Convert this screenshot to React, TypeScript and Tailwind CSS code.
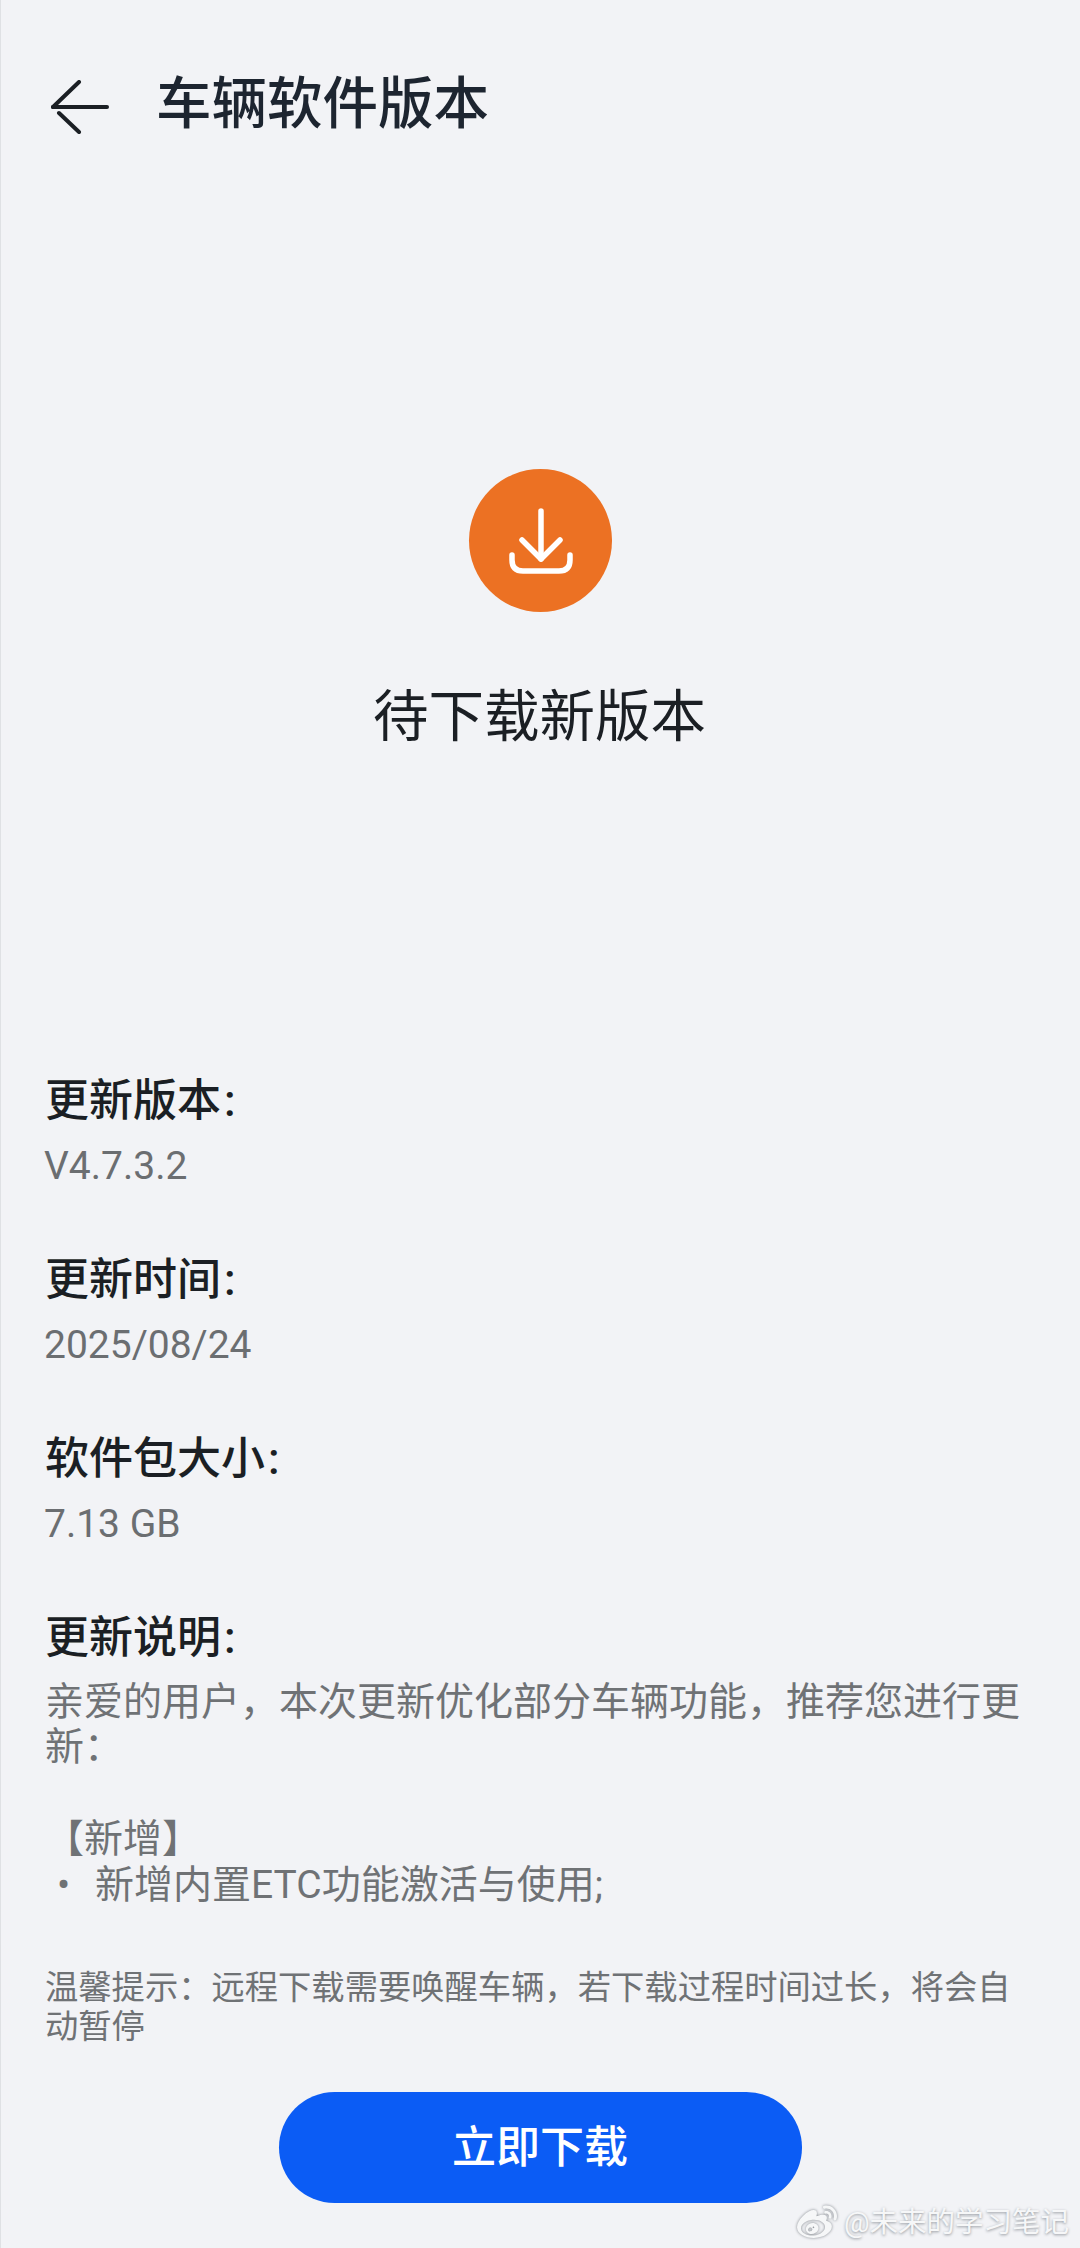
import React from "react";
import { FaWeibo } from "react-icons/fa";

const COMMA = "\uFF0C";
const COLON = "\uFF1A";

function Label({ text }: { text: string }) {
  return (
    <div className="text-[44px] leading-[60px] font-medium text-[#1b1f24]">
      {text}
      <span className="ml-[3px]">:</span>
    </div>
  );
}

function Section({ label, value }: { label: string; value: string }) {
  return (
    <div className="flex flex-col">
      <Label text={label} />
      <div className="text-[39px] leading-[50px] text-[#6b6e71] mt-[10px] -ml-[1px]">{value}</div>
    </div>
  );
}

export default function App() {
  return (
    <div className="w-[1080px] h-[2248px] bg-[#f2f3f6] border-l border-[#dfe1e4] overflow-hidden flex flex-col relative font-['Roboto','Noto_Sans_CJK_SC',sans-serif]">
      <div className="flex items-center pl-[50px] pt-[70px] h-[140px]">
        <svg width="58" height="54" viewBox="0 0 58 54" fill="none" stroke="#1b1f24" strokeWidth="4" strokeLinecap="round" strokeLinejoin="round" className="mt-[4px]">
          <path d="M2 27H56" />
          <path d="M28 2L2 27" />
          <path d="M8 33L28 52" />
        </svg>
        <div className="ml-[47px] text-[55.5px] leading-[70px] font-medium text-[#1d2530]">车辆软件版本</div>
      </div>

      <div className="flex flex-col items-center mt-[329px]">
        <div className="w-[143px] h-[143px] rounded-full bg-[#ec7123] flex items-center justify-center">
          <svg width="66" height="66" viewBox="0 0 66 66" fill="none" stroke="#ffffff" strokeWidth="5.5" strokeLinecap="round" strokeLinejoin="round">
            <path d="M33 3V51" />
            <path d="M14 32L33 51L52 32" />
            <path d="M4 47V52Q4 63 15 63H51Q62 63 62 52V47" />
          </svg>
        </div>
        <div className="mt-[69px] -ml-[2px] text-[55.5px] leading-[74px] text-[#1b1f24]">待下载新版本</div>
      </div>

      <div className="flex flex-col pl-[44px] pr-[45px] mt-[316px]">
        <div className="flex flex-col gap-[59px]">
          <Section label="更新版本" value="V4.7.3.2" />
          <Section label="更新时间" value="2025/08/24" />
          <Section label="软件包大小" value="7.13 GB" />
        </div>
        <div className="mt-[59px]">
          <Label text="更新说明" />
        </div>
        <div className="mt-[12px] text-[39px] leading-[45px] text-[#6f7275]">
          {`亲爱的用户${COMMA}本次更新优化部分车辆功能${COMMA}推荐您进行更新${COLON}`}
        </div>
        <div className="mt-[46px] text-[39px] leading-[46px] text-[#6f7275]">【新增】</div>
        <div className="flex text-[39px] leading-[46px] text-[#6f7275]">
          <span className="w-[50px] pl-[12px]">•</span>
          <span>新增内置ETC功能激活与使用;</span>
        </div>
        <div className="mt-[60px] text-[33.3px] leading-[39px] text-[#6f7275]">
          {`温馨提示${COLON}远程下载需要唤醒车辆${COMMA}若下载过程时间过长${COMMA}将会自动暂停`}
        </div>
      </div>

      <div className="flex justify-center mt-[46px]">
        <div className="w-[523px] h-[111px] rounded-full bg-[#0b5cf5] flex items-center justify-center text-white text-[44px] font-medium -ml-[1px]">立即下载</div>
      </div>

      <div className="absolute right-[11px] bottom-[5px] flex items-center gap-[5px] text-[#f6f7f8] text-[28.5px] leading-[40px] [text-shadow:0_1px_3px_#8f949a]">
        <FaWeibo className="w-[44px] h-[40px] text-[#f6f7f8] [filter:drop-shadow(0_0_1.5px_#80858b)]" />
        <span>@未来的学习笔记</span>
      </div>
    </div>
  );
}
